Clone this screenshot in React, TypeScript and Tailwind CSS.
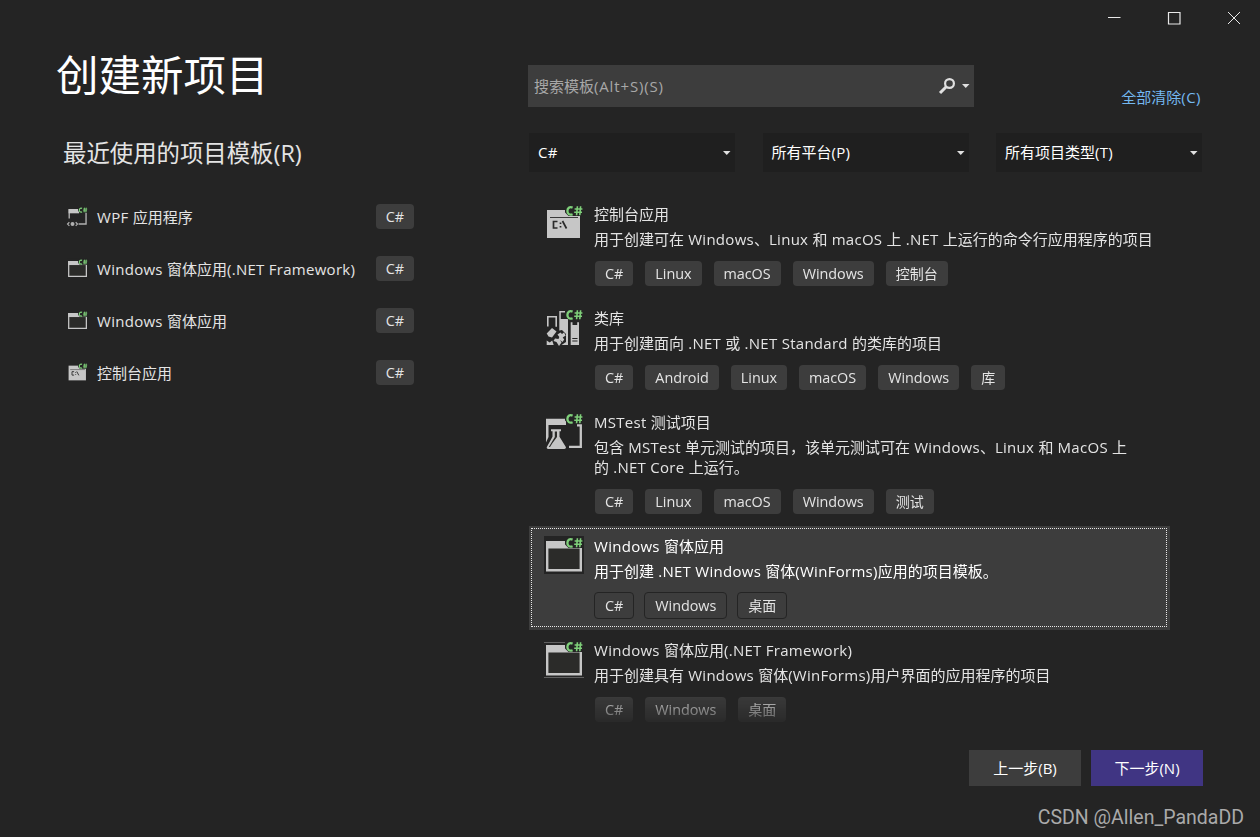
import { Fragment, type ReactNode } from 'react'

type IconKind = 'console' | 'library' | 'test' | 'window' | 'wpf'

interface Template {
  icon: IconKind
  title: string
  lines: string[]
  tags: string[]
  selected?: boolean
}

const recent: { icon: IconKind; name: string }[] = [
  { icon: 'wpf', name: 'WPF 应用程序' },
  { icon: 'window', name: 'Windows 窗体应用(.NET Framework)' },
  { icon: 'window', name: 'Windows 窗体应用' },
  { icon: 'console', name: '控制台应用' },
]

const templates: Template[] = [
  {
    icon: 'console',
    title: '控制台应用',
    lines: ['用于创建可在 Windows、Linux 和 macOS 上 .NET 上运行的命令行应用程序的项目'],
    tags: ['C#', 'Linux', 'macOS', 'Windows', '控制台'],
  },
  {
    icon: 'library',
    title: '类库',
    lines: ['用于创建面向 .NET 或 .NET Standard 的类库的项目'],
    tags: ['C#', 'Android', 'Linux', 'macOS', 'Windows', '库'],
  },
  {
    icon: 'test',
    title: 'MSTest 测试项目',
    lines: ['包含 MSTest 单元测试的项目，该单元测试可在 Windows、Linux 和 MacOS 上', '的 .NET Core 上运行。'],
    tags: ['C#', 'Linux', 'macOS', 'Windows', '测试'],
  },
  {
    icon: 'window',
    title: 'Windows 窗体应用',
    lines: ['用于创建 .NET Windows 窗体(WinForms)应用的项目模板。'],
    tags: ['C#', 'Windows', '桌面'],
    selected: true,
  },
  {
    icon: 'window',
    title: 'Windows 窗体应用(.NET Framework)',
    lines: ['用于创建具有 Windows 窗体(WinForms)用户界面的应用程序的项目'],
    tags: ['C#', 'Windows', '桌面'],
  },
]

// Latin runs are set slightly wider than the CJK around them
function Mixed({ text, latin = 'tracking-[0.28px]' }: { text: string; latin?: string }) {
  return (
    <>
      {text.split(/([\x20-\x7e]+)/).map((run, i) =>
        i % 2 ? (
          <span key={i} className={latin}>{run}</span>
        ) : (
          <Fragment key={i}>{run}</Fragment>
        )
      )}
    </>
  )
}

function CSharpBadge() {
  return (
    <g fill="none" strokeLinejoin="round">
      <path d="M22 1h16v9H25l-3-3z" fill="#242424" stroke="#242424" strokeWidth="2" />
      <path d="M28.600 2.600C25.500 1.300 23.400 3.200 23.400 6s2 4.500 5.200 3.200" stroke="#7fd07a" strokeWidth="2.300" />
      <path d="M33.400 1.200l-.8 9M36.600 1.200l-.8 9M30.600 4h7.800M30.200 7.300h7.800" stroke="#7fd07a" strokeWidth="1.600" />
    </g>
  )
}

const iconShapes: Record<IconKind, ReactNode> = {
  console: (
    <>
      <path d="M3 5h33v28H3z" fill="#c6c6c6" />
      <path d="M6 12.500h28" stroke="#3a3a3a" strokeWidth="1" />
      <path d="M13.500 16.500h-4v6.500h4M16.500 17.500v1.500M16.500 21v1.500M18.500 16l4 7.500" fill="none" stroke="#2a2a2a" strokeWidth="1.700" />
    </>
  ),
  library: (
    <>
      <path d="M3.800 17.500V7.800h8.400v10" fill="none" stroke="#c6c6c6" strokeWidth="1.600" />
      <path d="M15.300 2h7v1.500h-5.500V10H24v26h-8.700z" fill="#c6c6c6" />
      <path d="M26.700 13.300h1.800V16h4.700v-2.700H35V36h-8.300z" fill="#c6c6c6" />
      <path d="M28.300 29.500h5.200M28.300 32h5.200" stroke="#242424" strokeWidth="1.100" />
      <path d="M2 24l6-6 5 4 5-1 4 4v8l-6 4H9l-7-6z" fill="#242424" />
      <path d="M2.700 24.500L8 19l4.500 3.500-4.500 6-3.500-1z" fill="#c6c6c6" />
      <path d="M13.500 25.500l3-2 1.500 1.500 2-1.500 1.700 3-3 2 1.500 2-1.700 2.500-2.500-2 1.500 2.500-2.500 3.500-2.500-4-3-1 1.500-2.500 3.500.5.800-2z" fill="#c6c6c6" />
      <path d="M2.700 31.500l3 2 2.500-2 1.500 4.500h-7z" fill="#c6c6c6" />
    </>
  ),
  test: (
    <>
      <path d="M2 5.700h20V12H4.500v12L2 29.500z" fill="#c6c6c6" />
      <path d="M33 12.300h3.800v21.500H25" fill="none" stroke="#c6c6c6" strokeWidth="2.300" />
      <path d="M5.500 14.500h13v4l-2 1.500V24l8 13H1l6.500-13z" fill="#242424" />
      <path d="M7 16.300h10v2h-1.500v5.500l6.500 10.500q0 1.700-1.700 1.700H4.200q-1.700 0-1.500-1.700L8.500 23.800v-5.500H7z" fill="#c6c6c6" />
      <path d="M10.800 18.500h2.200v5.500l-4.500 6-2.500 4H4.800l6-10z" fill="#2b2b29" />
    </>
  ),
  window: (
    <>
      <path d="M0-1h40v38H0z" fill="#242424" />
      <path d="M3.200 5.200h33.600v28H3.200z" fill="#2b2b29" stroke="#c6c6c6" strokeWidth="2.400" />
      <path d="M2 4h36v7.500H2z" fill="#c6c6c6" />
    </>
  ),
  wpf: (
    <>
      <path d="M4.200 22V5.200h32v27H22" fill="none" stroke="#b0b0b0" strokeWidth="2.600" />
      <path d="M3 4h20v8H3z" fill="#c6c6c6" />
      <path d="M4.500 29l-3.500 3.500L4.500 36M16.500 29l3.500 3.500-3.500 3.500" fill="none" stroke="#b0b0b0" strokeWidth="2.200" />
      <circle cx="10.500" cy="32.500" r="3.800" fill="#b0b0b0" />
    </>
  ),
}

function TemplateIcon({ kind, className, ruled }: { kind: IconKind; className: string; ruled?: boolean }) {
  return (
    <svg viewBox="0 0 38 38" className={className}>
      {iconShapes[kind]}
      {ruled && <path d="M0 1.500h22M0 36.500h40" stroke="#606060" strokeWidth="1" />}
      <CSharpBadge />
    </svg>
  )
}

function Caret() {
  return (
    <svg viewBox="0 0 8 4" className="h-1 w-2 shrink-0">
      <path d="M0 0h7.500L3.750 4z" fill="#e0e0e0" />
    </svg>
  )
}

function Tag({ label, outlined }: { label: string; outlined?: boolean }) {
  return (
    <span
      className={`box-content flex h-[25px] items-center rounded-[4px] bg-[#3d3d3d] px-2.5 text-[14px] text-[#e4e4e4] ${
        outlined ? '-m-px border border-[#242424]' : ''
      }`}
    >
      <span className="pt-px">
        <Mixed text={label} latin="text-[14.4px] tracking-[-0.03px]" />
      </span>
    </span>
  )
}

function Filter({ label }: { label: string }) {
  return (
    <button className="flex h-[39px] w-[206px] items-center justify-between bg-[#1f1f1f] pr-1 pl-[9px] text-[15px] text-white">
      <span>
        <Mixed text={label} />
      </span>
      <Caret />
    </button>
  )
}

function TemplateRow({ item }: { item: Template }) {
  return (
    <div
      className={`relative flex w-[641px] pt-2.5 pb-3 pl-[15px] ${
        item.selected ? 'bg-[#3d3d3d] text-white' : 'text-[#e4e4e4]'
      }`}
    >
      {item.selected && <div className="absolute top-0.5 right-[3px] bottom-[3px] left-0.5 border border-dotted border-[#e8e8e8]" />}
      <TemplateIcon
        kind={item.icon}
        ruled={item.icon === 'window' && !item.selected}
        className="mt-px h-[38px] w-[38px] shrink-0 overflow-visible"
      />
      <div className="ml-3 text-[15px] leading-5 whitespace-nowrap">
        <p><Mixed text={item.title} /></p>
        <div className="mt-[5px]">
          {item.lines.map(line => (
            <p key={line}><Mixed text={line} /></p>
          ))}
        </div>
        <div className="mt-3 ml-px flex gap-3">
          {item.tags.map(tag => (
            <Tag key={tag} label={tag} outlined={item.selected} />
          ))}
        </div>
      </div>
    </div>
  )
}

export default function App() {
  return (
    <div className="relative flex h-[837px] w-[1260px] flex-col overflow-hidden bg-[#242424] font-['Open_Sans','Noto_Sans_CJK_SC',sans-serif] text-[#e4e4e4]">
      {/* Window controls */}
      <div className="flex h-9 shrink-0 items-center justify-end gap-[46px] pr-[19px]">
        <svg viewBox="0 0 14 14" className="h-3.5 w-3.5"><path d="M1 6.500h12.500" stroke="#e8e8e8" /></svg>
        <svg viewBox="0 0 14 14" className="h-3.5 w-3.5"><path d="M1.500 1.500h11.500v11.500h-11.500z" fill="none" stroke="#e8e8e8" strokeWidth="1.200" /></svg>
        <svg viewBox="0 0 14 14" className="h-3.5 w-3.5"><path d="M1 1l12 12M13 1L1 13" stroke="#e8e8e8" /></svg>
      </div>

      <div className="flex">
        {/* Recent templates */}
        <div className="w-[528px] shrink-0 pl-[56px]">
          <h1 className="mt-[7px] text-[42.500px] leading-[64px] text-white">创建新项目</h1>
          <h2 className="mt-[29px] ml-[7px] text-[23.400px] leading-[34px]">最近使用的项目模板(R)</h2>
          <div className="mt-[34px] ml-[11px] flex w-[347px] flex-col gap-[27px]">
            {recent.map(r => (
              <div key={r.name} className="flex h-[25px] items-center text-[15px] whitespace-nowrap">
                <TemplateIcon kind={r.icon} className="h-5 w-5 shrink-0 overflow-visible" />
                <span className="ml-2.5 grow pt-0.5"><Mixed text={r.name} /></span>
                <Tag label="C#" />
              </div>
            ))}
          </div>
        </div>

        {/* Search, filters and list */}
        <div className="w-[675px] pt-[29px]">
          <div className="flex items-start justify-between">
            <div className="flex h-[42px] w-[446px] items-center bg-[#3d3d3d] pr-1 pl-1.5 text-[15px] text-[#a8a8a8]">
              <span className="grow"><Mixed text="搜索模板(Alt+S)(S)" latin="tracking-[0.85px]" /></span>
              <svg viewBox="0 0 18 18" className="mr-1.5 h-[18px] w-[18px]">
                <circle cx="11.500" cy="6.500" r="4.400" fill="none" stroke="#e0e0e0" strokeWidth="2.200" />
                <path d="M8.500 9.500L2 16" stroke="#e0e0e0" strokeWidth="3" />
              </svg>
              <Caret />
            </div>
            <a className="mt-[22px] mr-0.5 text-[15px] leading-5 text-[#74b8f0]">
              <Mixed text="全部清除(C)" latin="tracking-[0.5px]" />
            </a>
          </div>
          <div className="mt-[26px] flex justify-between pr-px pl-px">
            <Filter label="C#" />
            <Filter label="所有平台(P)" />
            <Filter label="所有项目类型(T)" />
          </div>
          <div className="mt-[22px] ml-px h-[528px] overflow-hidden [mask-image:linear-gradient(to_bottom,black_498px,transparent_538px)]">
            {templates.map(t => (
              <TemplateRow key={t.title} item={t} />
            ))}
          </div>
        </div>
      </div>

      {/* Footer */}
      <div className="mt-7 flex justify-end gap-2.5 pr-[57px] text-[15px] text-white">
        <button className="h-9 w-28 bg-[#3d3d3d]">上一步(B)</button>
        <button className="h-9 w-28 bg-[#403583]">下一步(N)</button>
      </div>
      <div className="mt-[21px] pr-4 text-right font-[Roboto,sans-serif] text-[19.500px] leading-[22px] text-[#aaaaaa]">
        CSDN @Allen_PandaDD
      </div>
    </div>
  )
}
